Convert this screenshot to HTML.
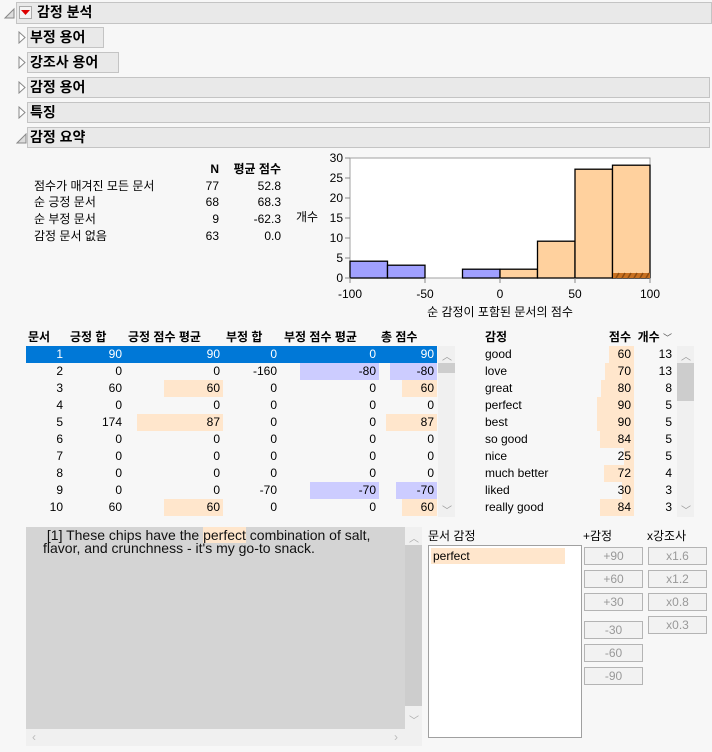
<!DOCTYPE html>
<html><head><meta charset="utf-8">
<style>
*{margin:0;padding:0;box-sizing:border-box}
body{width:712px;height:752px;background:#f7f7f7;font-family:"Liberation Sans","Noto Sans CJK KR",sans-serif;font-size:12px;color:#000;position:relative;overflow:hidden}
.a{position:absolute;white-space:nowrap}
.hd{position:absolute;background:#e9e9e9;border:1px solid #c4c4c4;font-weight:bold;font-size:14px;line-height:19px;padding-left:2px}
.r{position:absolute;text-align:right;line-height:17px;height:17px;white-space:nowrap}
.l{position:absolute;line-height:17px;height:17px;white-space:nowrap}
.btn{position:absolute;width:59px;height:18px;border:1px solid #b4b4b4;background:#f2f2f2;color:#999;text-align:center;line-height:16px;font-size:12px}
.sc{position:absolute;background:#f0f0f0}
</style></head><body>
<svg class="a" style="left:3px;top:7px" width="12" height="12"><path d="M2 11 L11 2 L11 11 Z" fill="#ddd" stroke="#888"/></svg>
<div class="hd" style="left:16px;top:2px;width:696px;height:22px;padding-left:20px">감정 분석</div>
<div class="a" style="left:19px;top:6px;width:13px;height:13px;border:1px solid #aaa;background:#f4f4f4"></div>
<svg class="a" style="left:21px;top:10px" width="9" height="6"><path d="M0 0 L9 0 L4.5 5 Z" fill="#d00"/></svg>

<svg class="a" style="left:18px;top:31px" width="8" height="13"><path d="M1 1 L7 6.5 L1 12 Z" fill="#fff" stroke="#888"/></svg>
<div class="hd" style="left:27px;top:27px;width:77px;height:21px">부정 용어</div>
<svg class="a" style="left:18px;top:56px" width="8" height="13"><path d="M1 1 L7 6.5 L1 12 Z" fill="#fff" stroke="#888"/></svg>
<div class="hd" style="left:27px;top:52px;width:92px;height:21px">강조사 용어</div>
<svg class="a" style="left:18px;top:81px" width="8" height="13"><path d="M1 1 L7 6.5 L1 12 Z" fill="#fff" stroke="#888"/></svg>
<div class="hd" style="left:27px;top:77px;width:683px;height:21px">감정 용어</div>
<svg class="a" style="left:18px;top:106px" width="8" height="13"><path d="M1 1 L7 6.5 L1 12 Z" fill="#fff" stroke="#888"/></svg>
<div class="hd" style="left:27px;top:102px;width:683px;height:21px">특징</div>
<svg class="a" style="left:16px;top:133px" width="11" height="11"><path d="M1 10 L10 1 L10 10 Z" fill="#ddd" stroke="#888"/></svg>
<div class="hd" style="left:27px;top:127px;width:683px;height:21px">감정 요약</div>

<div class="r" style="left:180px;top:161px;width:39px;font-weight:bold">N</div>
<div class="r" style="left:220px;top:161px;width:61px;font-weight:bold">평균 점수</div>
<div class="l" style="left:34px;top:178px">점수가 매겨진 모든 문서</div>
<div class="r" style="left:180px;top:178px;width:39px">77</div><div class="r" style="left:220px;top:178px;width:61px">52.8</div>
<div class="l" style="left:34px;top:194px">순 긍정 문서</div>
<div class="r" style="left:180px;top:194px;width:39px">68</div><div class="r" style="left:220px;top:194px;width:61px">68.3</div>
<div class="l" style="left:34px;top:211px">순 부정 문서</div>
<div class="r" style="left:180px;top:211px;width:39px">9</div><div class="r" style="left:220px;top:211px;width:61px">-62.3</div>
<div class="l" style="left:34px;top:228px">감정 문서 없음</div>
<div class="r" style="left:180px;top:228px;width:39px">63</div><div class="r" style="left:220px;top:228px;width:61px">0.0</div>

<svg class="a" style="left:290px;top:150px" width="380" height="175" font-family="Liberation Sans, Noto Sans CJK KR, sans-serif" font-size="12">
<rect x="60" y="8" width="300" height="120" fill="#fff" stroke="#a0a0a0"/>
<g stroke="#000" stroke-width="1.3">
<rect x="60" y="111.2" width="37.5" height="16.8" fill="#a0a0ff"/>
<rect x="97.5" y="115.2" width="37.5" height="12.8" fill="#a0a0ff"/>
<rect x="172.5" y="119.2" width="37.5" height="8.8" fill="#a0a0ff"/>
<rect x="210" y="119.2" width="37.5" height="8.8" fill="#ffd19e"/>
<rect x="247.5" y="91.2" width="37.5" height="36.8" fill="#ffd19e"/>
<rect x="285" y="19.2" width="37.5" height="108.8" fill="#ffd19e"/>
<rect x="322.5" y="15.2" width="37.5" height="112.8" fill="#ffd19e"/>
</g>
<rect x="323" y="123" width="37" height="5" fill="#c87020"/>
<path d="M326 128 L329 123 M332 128 L335 123 M338 128 L341 123 M344 128 L347 123 M350 128 L353 123 M356 128 L359 123" stroke="#8a4a10" stroke-width="1.5"/>
<g stroke="#888"><path d="M55 8H60M55 28H60M55 48H60M55 68H60M55 88H60M55 108H60M55 128H60M60 128V133M135 128V133M210 128V133M285 128V133M360 128V133"/></g>
<g text-anchor="end" fill="#000"><text x="53" y="12">30</text><text x="53" y="32">25</text><text x="53" y="52">20</text><text x="53" y="72">15</text><text x="53" y="92">10</text><text x="53" y="112">5</text><text x="53" y="132">0</text></g>
<text x="6" y="71">개수</text>
<g text-anchor="middle"><text x="60" y="148">-100</text><text x="135" y="148">-50</text><text x="210" y="148">0</text><text x="285" y="148">50</text><text x="360" y="148">100</text></g>
<text x="210" y="166" text-anchor="middle">순 감정이 포함된 문서의 점수</text>
</svg>

<div class="a" style="left:26px;top:329px;font-weight:bold;line-height:17px">
<span class="a" style="left:2px">문서</span><span class="a" style="left:44px">긍정 합</span><span class="a" style="left:102px">긍정 점수 평균</span><span class="a" style="left:200px">부정 합</span><span class="a" style="left:258px">부정 점수 평균</span><span class="a" style="left:355px">총 점수</span></div>
<div class="a" style="left:26px;top:346px;width:411px;height:17px;background:#0078d7"></div>
<div class="a" style="left:300px;top:363px;width:79px;height:17px;background:#ccccff"></div>
<div class="a" style="left:390px;top:363px;width:47px;height:17px;background:#ccccff"></div>
<div class="a" style="left:164px;top:380px;width:59px;height:17px;background:#ffe6cc"></div>
<div class="a" style="left:402px;top:380px;width:35px;height:17px;background:#ffe6cc"></div>
<div class="a" style="left:137px;top:414px;width:86px;height:17px;background:#ffe6cc"></div>
<div class="a" style="left:386px;top:414px;width:51px;height:17px;background:#ffe6cc"></div>
<div class="a" style="left:310px;top:482px;width:69px;height:17px;background:#ccccff"></div>
<div class="a" style="left:396px;top:482px;width:41px;height:17px;background:#ccccff"></div>
<div class="a" style="left:164px;top:499px;width:59px;height:17px;background:#ffe6cc"></div>
<div class="a" style="left:402px;top:499px;width:35px;height:17px;background:#ffe6cc"></div>
<div id="dt"></div>
<div class="sc" style="left:438px;top:346px;width:17px;height:171px"></div>
<div class="a" style="left:438px;top:363px;width:17px;height:10px;background:#cdcdcd"></div>
<div class="a" style="left:442px;top:348px;color:#999;font-size:10px">︿</div>
<div class="a" style="left:442px;top:502px;color:#999;font-size:10px">﹀</div>

<div class="a" style="left:485px;top:329px;font-weight:bold;line-height:17px">감정</div>
<div class="r" style="left:590px;top:329px;width:41px;font-weight:bold">점수</div>
<div class="r" style="left:630px;top:329px;width:42px;font-weight:bold">개수 <span style="font-weight:normal;font-size:9px;color:#555">﹀</span></div>
<div class="sc" style="left:677px;top:346px;width:17px;height:171px"></div>
<div class="a" style="left:677px;top:363px;width:17px;height:38px;background:#cdcdcd"></div>
<div class="a" style="left:681px;top:348px;color:#999;font-size:10px">︿</div>
<div class="a" style="left:681px;top:502px;color:#999;font-size:10px">﹀</div>
<div id="st"></div>

<div class="a" style="left:26px;top:527px;width:379px;height:202px;background:#d4d4d4"></div>
<div class="sc" style="left:405px;top:527px;width:17px;height:202px"></div>
<div class="a" style="left:405px;top:545px;width:17px;height:161px;background:#cdcdcd"></div>
<div class="a" style="left:409px;top:530px;color:#aaa;font-size:10px">︿</div>
<div class="a" style="left:409px;top:712px;color:#aaa;font-size:10px">﹀</div>
<div class="sc" style="left:26px;top:729px;width:396px;height:17px"></div>
<div class="a" style="left:32px;top:730px;color:#bbb">‹</div><div class="a" style="left:394px;top:730px;color:#bbb">›</div>
<div class="a" style="left:43px;top:529px;font-size:14px;line-height:13px;color:#111">&nbsp;[1] These chips have the <span style="background:#ffe6cc">perfect</span> combination of salt,<br>flavor, and crunchness - it's my go-to snack.</div>

<div class="a" style="left:428px;top:529px;line-height:14px">문서 감정</div>
<div class="a" style="left:428px;top:545px;width:154px;height:193px;background:#fff;border:1px solid #a0a0a0"></div>
<div class="a" style="left:431px;top:548px;width:134px;height:16px;background:#ffe6cc;line-height:16px;padding-left:2px">perfect</div>
<div class="a" style="left:583px;top:529px;line-height:14px">+감정</div>
<div class="a" style="left:647px;top:529px;line-height:14px">x강조사</div>
<div class="btn" style="left:584px;top:547px">+90</div>
<div class="btn" style="left:584px;top:570px">+60</div>
<div class="btn" style="left:584px;top:593px">+30</div>
<div class="btn" style="left:584px;top:621px">-30</div>
<div class="btn" style="left:584px;top:644px">-60</div>
<div class="btn" style="left:584px;top:667px">-90</div>
<div class="btn" style="left:648px;top:547px">x1.6</div>
<div class="btn" style="left:648px;top:570px">x1.2</div>
<div class="btn" style="left:648px;top:593px">x0.8</div>
<div class="btn" style="left:648px;top:616px">x0.3</div>

<script>
var d=[[1,90,90,0,0,90],[2,0,0,-160,-80,-80],[3,60,60,0,0,60],[4,0,0,0,0,0],[5,174,87,0,0,87],[6,0,0,0,0,0],[7,0,0,0,0,0],[8,0,0,0,0,0],[9,0,0,-70,-70,-70],[10,60,60,0,0,60]];
var rights=[63,122,220,277,376,434],h='';
d.forEach(function(r,i){var y=346+i*17;r.forEach(function(v,j){var x=rights[j]-60;h+='<div class="r" style="left:'+x+'px;top:'+y+'px;width:60px;'+(i==0?'color:#fff':'')+'">'+v+'</div>';});});
document.getElementById('dt').innerHTML=h;
var s=[['good',60,13],['love',70,13],['great',80,8],['perfect',90,5],['best',90,5],['so good',84,5],['nice',25,5],['much better',72,4],['liked',30,3],['really good',84,3]];
h='';
s.forEach(function(r,i){var y=346+i*17,w=Math.round(r[1]*0.41);
h+='<div class="a" style="left:'+(634-w)+'px;top:'+y+'px;width:'+w+'px;height:17px;background:#ffe6cc"></div>';
h+='<div class="l" style="left:485px;top:'+y+'px">'+r[0]+'</div><div class="r" style="left:591px;top:'+y+'px;width:40px">'+r[1]+'</div><div class="r" style="left:632px;top:'+y+'px;width:40px">'+r[2]+'</div>';});
document.getElementById('st').innerHTML=h;
</script>
</body></html>
